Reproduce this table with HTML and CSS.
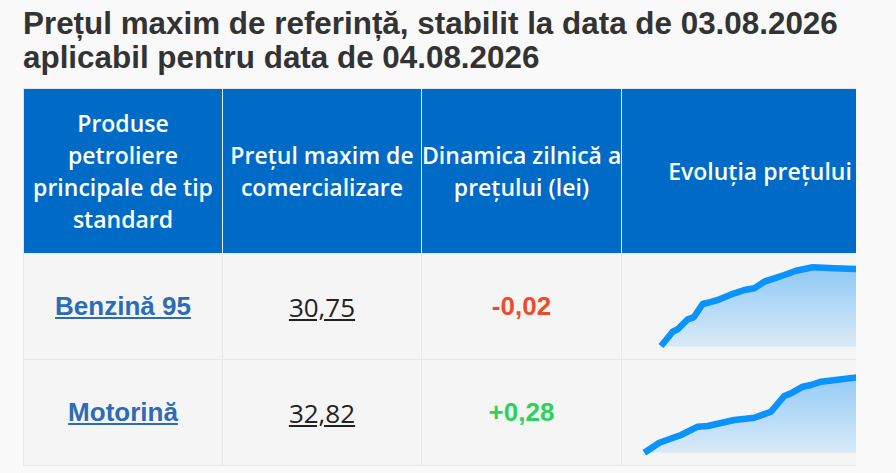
FILE: index.html
```html
<!DOCTYPE html>
<html lang="ro">
<head>
<meta charset="utf-8">
<title>Prețul maxim de referință</title>
<link rel="stylesheet" href="styles.css">
</head>
<body>
<div class="page">
  <h1 class="title">Prețul maxim de referință, stabilit la data de 03.08.2026<br>aplicabil pentru data de 04.08.2026</h1>
  <div class="table-wrap">
    <table class="prices">
      <colgroup>
        <col class="c1"><col class="c2"><col class="c3"><col class="c4">
      </colgroup>
      <thead>
        <tr>
          <th>Produse<br>petroliere<br>principale de tip<br>standard</th>
          <th>Prețul maxim de<br>comercializare</th>
          <th>Dinamica zilnică a<br>prețului (lei)</th>
          <th>Evoluția prețului</th>
        </tr>
      </thead>
      <tbody>
        <tr>
          <td><a class="product" href="#">Benzină 95</a></td>
          <td><a class="price" href="#">30,75</a></td>
          <td><span class="delta down">-0,02</span></td>
          <td class="chart-cell">
            <svg class="chart" viewBox="0 0 276 105" width="276" height="105">
              <defs>
                <linearGradient id="g1" x1="0" y1="0" x2="0" y2="1">
                  <stop offset="0" stop-color="#8fc9f5"/>
                  <stop offset="1" stop-color="#d9eaf8"/>
                </linearGradient>
              </defs>
              <path fill="url(#g1)" d="M39 92.7 L39 92 L50.7 77.7 L55.7 75.3 L65.7 65.3 L71.7 63.3 L80.7 50 L87.3 48.3 L95.7 46 L112.3 39.3 L122.3 36 L132.3 34.3 L142.3 27.7 L152.3 24.3 L162.3 21 L174 16.7 L190.7 13.3 L212.3 14.3 L235 15 L280 15.5 L280 92.7 Z"/>
              <path fill="none" stroke="#0a93fd" stroke-width="6.5" stroke-linejoin="round" d="M39 92 L50.7 77.7 L55.7 75.3 L65.7 65.3 L71.7 63.3 L80.7 50 L87.3 48.3 L95.7 46 L112.3 39.3 L122.3 36 L132.3 34.3 L142.3 27.7 L152.3 24.3 L162.3 21 L174 16.7 L190.7 13.3 L212.3 14.3 L235 15 L280 15.5"/>
            </svg>
          </td>
        </tr>
        <tr>
          <td><a class="product" href="#">Motorină</a></td>
          <td><a class="price" href="#">32,82</a></td>
          <td><span class="delta up">+0,28</span></td>
          <td class="chart-cell">
            <svg class="chart" viewBox="0 0 276 105" width="276" height="105">
              <defs>
                <linearGradient id="g2" x1="0" y1="0" x2="0" y2="1">
                  <stop offset="0" stop-color="#8fc9f5"/>
                  <stop offset="1" stop-color="#d9eaf8"/>
                </linearGradient>
              </defs>
              <path fill="url(#g2)" d="M22.3 92.7 L37.3 82.7 L59 75 L75.7 66.7 L85.7 66 L112.3 60 L132.3 57.7 L149 51.7 L162.3 36 L169 33.3 L180.7 26.7 L189 25 L199 21.7 L235 17.3 L280 12 L280 92.7 Z"/>
              <path fill="none" stroke="#0a93fd" stroke-width="6.5" stroke-linejoin="round" d="M22.3 92.7 L37.3 82.7 L59 75 L75.7 66.7 L85.7 66 L112.3 60 L132.3 57.7 L149 51.7 L162.3 36 L169 33.3 L180.7 26.7 L189 25 L199 21.7 L235 17.3 L280 12"/>
            </svg>
          </td>
        </tr>
      </tbody>
    </table>
  </div>
</div>
</body>
</html>
```

FILE: styles.css
```css
html, body {
  margin: 0;
  padding: 0;
  background: #f9f9f9;
}

.page {
  padding: 7px 0 0 23px;
}

.title {
  margin: 0 0 13px 0;
  font-family: "Liberation Sans", Arial, sans-serif;
  font-weight: bold;
  font-size: 31.4px;
  line-height: 34px;
  color: #333333;
}

.table-wrap {
  width: 833px;
  overflow: hidden;
}

.prices {
  border-collapse: collapse;
  table-layout: fixed;
  width: 875px;
  border-top: 1px solid #e6e6e6;
}

.c1 { width: 199px; }
.c2 { width: 199px; }
.c3 { width: 200px; }
.c4 { width: 277px; }

.prices th {
  background: #006bc6;
  color: #ffffff;
  font-family: "Open Sans", "Noto Sans", sans-serif;
  font-weight: 600;
  font-size: 23px;
  line-height: 32px;
  text-align: center;
  vertical-align: middle;
  padding: 0;
  height: 164px;
  white-space: nowrap;
  border-left: 1px solid #e8eef6;
  border-right: 1px solid #e8eef6;
}

.prices th:first-child {
  border-left: 1px solid #e6e6e6;
}

.prices td {
  background: #f5f5f5;
  border: 1px solid #e8e8e8;
  text-align: center;
  vertical-align: middle;
  height: 105px;
  padding: 0;
}

.prices td.chart-cell {
  padding: 0;
  vertical-align: top;
  overflow: hidden;
}

.chart {
  display: block;
  overflow: hidden;
}

.product {
  font-family: "Liberation Sans", Arial, sans-serif;
  font-weight: bold;
  font-size: 26px;
  color: #2c6cb6;
  text-decoration: underline;
  text-underline-offset: 2px;
}

.price {
  font-family: "Open Sans", "Noto Sans", sans-serif;
  font-size: 26px;
  color: #222222;
  text-decoration: underline;
}

.delta {
  font-family: "Liberation Sans", Arial, sans-serif;
  font-weight: bold;
  font-size: 26px;
}

.delta.down { color: #f04a2c; }
.delta.up { color: #2bd35b; }
```
